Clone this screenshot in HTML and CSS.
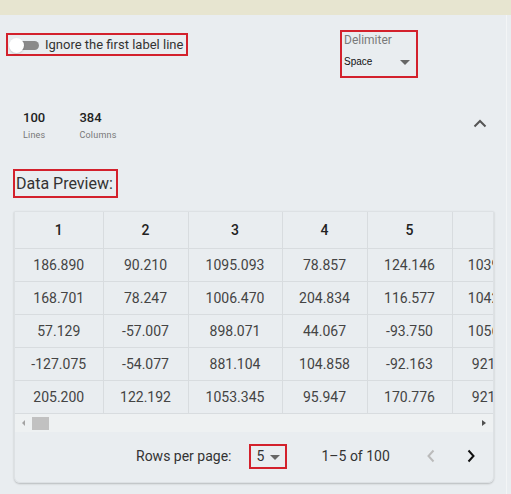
FILE: index.html
```html
<!DOCTYPE html>
<html>
<head>
<meta charset="utf-8">
<link rel="stylesheet" href="styles.css">
</head>
<body>
<div class="topbar"></div>
<div class="page">
  <div class="options">
    <label class="toggle-box">
      <span class="switch"><span class="track"></span><span class="thumb"></span></span>
      <span class="toggle-text">Ignore the first label line</span>
    </label>
    <div class="delim-box">
      <div class="delim-label">Delimiter</div>
      <div class="delim-select">
        <span class="delim-value">Space</span>
        <span class="caret"></span>
      </div>
    </div>
  </div>

  <div class="stats">
    <div class="stat">
      <div class="stat-num">100</div>
      <div class="stat-label">Lines</div>
    </div>
    <div class="stat">
      <div class="stat-num">384</div>
      <div class="stat-label">Columns</div>
    </div>
    <svg class="chev-up" width="14" height="9" viewBox="0 0 14 9"><path d="M1.5 7.5 L7 2 L12.5 7.5" fill="none" stroke="#555" stroke-width="2"/></svg>
  </div>

  <div class="title-row"><h2 class="preview-title">Data Preview:</h2></div>

  <div class="card">
    <div class="table-wrap">
      <table class="grid">
        <colgroup>
          <col class="c1"><col class="c2"><col class="c3"><col class="c4"><col class="c5"><col class="c6">
        </colgroup>
        <thead>
          <tr><th>1</th><th>2</th><th>3</th><th>4</th><th>5</th><th>6</th></tr>
        </thead>
        <tbody>
          <tr><td>186.890</td><td>90.210</td><td>1095.093</td><td>78.857</td><td>124.146</td><td>1039.512</td></tr>
          <tr><td>168.701</td><td>78.247</td><td>1006.470</td><td>204.834</td><td>116.577</td><td>1042.087</td></tr>
          <tr><td>57.129</td><td>-57.007</td><td>898.071</td><td>44.067</td><td>-93.750</td><td>1056.334</td></tr>
          <tr><td>-127.075</td><td>-54.077</td><td>881.104</td><td>104.858</td><td>-92.163</td><td>921.470</td></tr>
          <tr><td>205.200</td><td>122.192</td><td>1053.345</td><td>95.947</td><td>170.776</td><td>921.915</td></tr>
        </tbody>
      </table>
    </div>
    <div class="hscroll">
      <span class="arrow-left"></span>
      <span class="thumb-bar"></span>
      <span class="arrow-right"></span>
    </div>
    <div class="pager">
      <span class="rows-label">Rows per page:</span>
      <div class="rows-select"><span>5</span><span class="caret"></span></div>
      <span class="range">1–5 of 100</span>
      <svg class="nav prev" width="10" height="14" viewBox="0 0 10 14"><path d="M7.5 1.5 L2.5 7 L7.5 12.5" fill="none" stroke="#bbb" stroke-width="2"/></svg>
      <svg class="nav next" width="10" height="14" viewBox="0 0 10 14"><path d="M2.5 1.5 L7.5 7 L2.5 12.5" fill="none" stroke="#111" stroke-width="2"/></svg>
    </div>
  </div>
</div>
</body>
</html>
```

FILE: styles.css
```css
* { box-sizing: border-box; }
html, body { margin: 0; padding: 0; }
body {
  background: #e9edf0;
  font-family: Roboto, "Liberation Sans", sans-serif;
  color: #333;
  width: 511px;
  height: 494px;
  overflow: hidden;
}
.topbar {
  height: 15px;
  background: #e7e5d0;
}
.page {
  width: 507px;
  height: 479px;
  border-right: 1px solid #f3f5f6;
}
.options {
  display: flex;
  align-items: flex-start;
  padding-top: 15px;
}
.toggle-box {
  display: flex;
  align-items: center;
  margin-left: 6px;
  margin-top: 3px;
  width: 182px;
  height: 23px;
  border: 2px solid #d3212c;
  padding-left: 1px;
}
.switch {
  position: relative;
  width: 30px;
  height: 16px;
  display: inline-block;
}
.track {
  position: absolute;
  left: 7px;
  top: 4px;
  width: 23px;
  height: 9px;
  border-radius: 5px;
  background: #8a8a8a;
}
.thumb {
  position: absolute;
  left: 0;
  top: 1px;
  width: 15px;
  height: 15px;
  border-radius: 50%;
  background: #fff;
  box-shadow: 0 1px 2px rgba(0,0,0,0.15);
}
.toggle-text {
  margin-left: 6px;
  font-size: 13px;
  color: #333;
  line-height: 16px;
}
.delim-box {
  margin-left: 152px;
  width: 78px;
  height: 48px;
  border: 2px solid #d3212c;
  padding: 1px 0 0 2px;
}
.delim-label {
  font-size: 12px;
  color: #7a7a7a;
  line-height: 14px;
}
.delim-select {
  display: flex;
  align-items: center;
  margin-top: 7px;
  height: 14px;
  padding-right: 6px;
}
.delim-value {
  font-family: "Liberation Sans", Arial, sans-serif;
  font-size: 10px;
  color: #111;
  flex: 1;
}
.caret {
  width: 0;
  height: 0;
  border-left: 5px solid transparent;
  border-right: 5px solid transparent;
  border-top: 5px solid #666;
  margin-top: 3px;
}
.stats {
  display: flex;
  align-items: flex-start;
  padding: 32px 0 0 23px;
  height: 91px;
}
.stat { margin-right: 34px; }
.stat-num {
  font-size: 13px;
  font-weight: 500;
  color: #222;
  line-height: 16px;
}
.stat-label {
  font-size: 9px;
  color: #777;
  line-height: 12px;
  margin-top: 3px;
  letter-spacing: 0.2px;
}
.chev-up {
  margin-left: auto;
  margin-right: 19px;
  margin-top: 9px;
}
.title-row {
  padding-left: 13px;
  height: 42px;
}
.preview-title {
  display: inline-block;
  margin: 0;
  width: 105px;
  height: 29px;
  border: 2px solid #d3212c;
  font-size: 16px;
  font-weight: 400;
  color: #333;
  line-height: 25px;
  padding-left: 1px;
}
.card {
  margin-left: 14px;
  width: 480px;
  height: 272px;
  border: 1px solid #dde1e4;
  border-radius: 0 0 6px 6px;
  box-shadow: 0 1px 2px rgba(0,0,0,0.22);
  overflow: hidden;
}
.table-wrap {
  width: 478px;
  overflow: hidden;
}
.grid {
  border-collapse: collapse;
  table-layout: fixed;
  width: 527px;
}
.c1 { width: 88px; }
.c2 { width: 85px; }
.c3 { width: 94px; }
.c4 { width: 85px; }
.c5 { width: 85px; }
.c6 { width: 90px; }
.grid th, .grid td {
  border-right: 1px solid #d8dcdf;
  border-bottom: 1px solid #d8dcdf;
  text-align: center;
  white-space: nowrap;
  overflow: hidden;
  padding: 0;
}
.grid th {
  height: 36px;
  font-size: 14px;
  font-weight: 500;
  color: #222;
}
.grid td {
  height: 33px;
  font-size: 14px;
  color: #444;
}
.grid th:last-child, .grid td:last-child { border-right: none; }
.hscroll {
  position: relative;
  height: 18px;
  width: 478px;
  background: #eef1f2;
}
.arrow-left {
  position: absolute;
  left: 7px;
  top: 6px;
  width: 0; height: 0;
  border-top: 3px solid transparent;
  border-bottom: 3px solid transparent;
  border-right: 3px solid #a3a3a3;
}
.thumb-bar {
  position: absolute;
  left: 17px;
  top: 3px;
  width: 17px;
  height: 13px;
  background: #c1c1c1;
}
.arrow-right {
  position: absolute;
  right: 7px;
  top: 6px;
  width: 0; height: 0;
  border-top: 3.5px solid transparent;
  border-bottom: 3.5px solid transparent;
  border-left: 4px solid #505050;
}
.pager {
  display: flex;
  align-items: center;
  height: 49px;
  padding-left: 121px;
  font-size: 14px;
  color: #333;
}
.rows-select {
  display: flex;
  align-items: center;
  margin-left: 18px;
  width: 38px;
  height: 25px;
  border: 2px solid #d3212c;
  padding-left: 5px;
}
.rows-select .caret { margin-left: 6px; margin-top: 2px; }
.range { margin-left: 34px; }
.nav.prev { margin-left: 36px; }
.nav.next { margin-left: 30px; }
```
